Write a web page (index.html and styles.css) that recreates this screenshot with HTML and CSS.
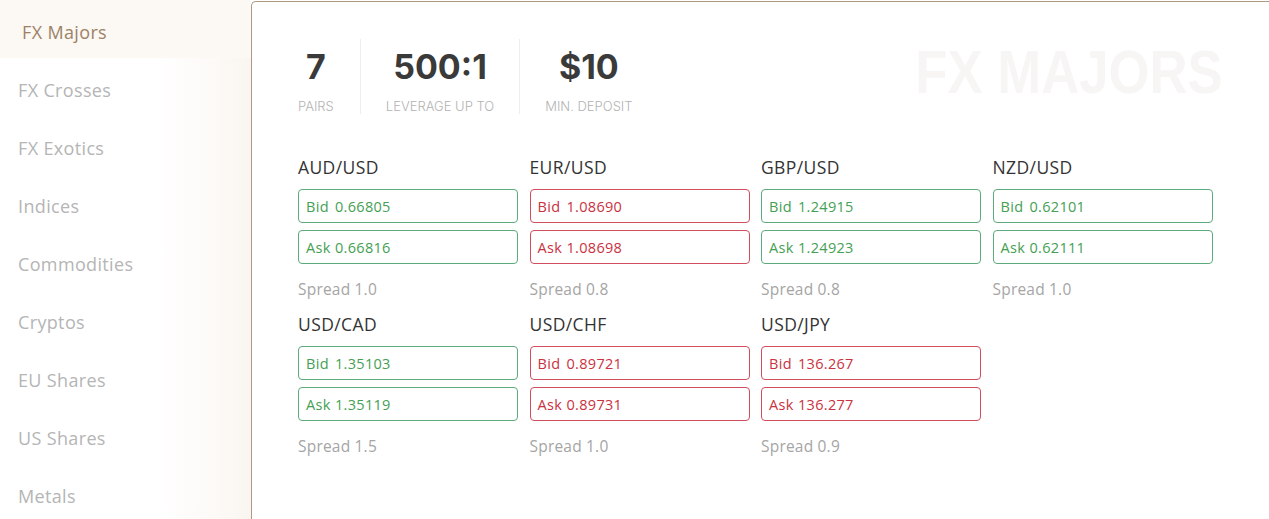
FILE: index.html
```html
<!DOCTYPE html>
<html lang="en">
<head>
<meta charset="utf-8">
<title>FX Majors</title>
<link rel="stylesheet" href="styles.css">
</head>
<body>
<div class="page">
  <nav class="sidebar">
    <div class="nav-item active">FX Majors</div>
    <div class="nav-item">FX Crosses</div>
    <div class="nav-item">FX Exotics</div>
    <div class="nav-item">Indices</div>
    <div class="nav-item">Commodities</div>
    <div class="nav-item">Cryptos</div>
    <div class="nav-item">EU Shares</div>
    <div class="nav-item">US Shares</div>
    <div class="nav-item">Metals</div>
  </nav>
  <main class="panel">
    <div class="watermark">FX MAJORS</div>
    <div class="stats">
      <div class="stat">
        <div class="stat-value">7</div>
        <div class="stat-label">PAIRS</div>
      </div>
      <div class="stat">
        <div class="stat-value">500:1</div>
        <div class="stat-label">LEVERAGE UP TO</div>
      </div>
      <div class="stat">
        <div class="stat-value">$10</div>
        <div class="stat-label">MIN. DEPOSIT</div>
      </div>
    </div>
    <div class="grid">
      <div class="pair up">
        <div class="pair-name">AUD/USD</div>
        <div class="quote"><span class="q-label">Bid</span>0.66805</div>
        <div class="quote"><span class="q-label">Ask</span>0.66816</div>
        <div class="spread">Spread 1.0</div>
      </div>
      <div class="pair down">
        <div class="pair-name">EUR/USD</div>
        <div class="quote"><span class="q-label">Bid</span>1.08690</div>
        <div class="quote"><span class="q-label">Ask</span>1.08698</div>
        <div class="spread">Spread 0.8</div>
      </div>
      <div class="pair up">
        <div class="pair-name">GBP/USD</div>
        <div class="quote"><span class="q-label">Bid</span>1.24915</div>
        <div class="quote"><span class="q-label">Ask</span>1.24923</div>
        <div class="spread">Spread 0.8</div>
      </div>
      <div class="pair up">
        <div class="pair-name">NZD/USD</div>
        <div class="quote"><span class="q-label">Bid</span>0.62101</div>
        <div class="quote"><span class="q-label">Ask</span>0.62111</div>
        <div class="spread">Spread 1.0</div>
      </div>
      <div class="pair up">
        <div class="pair-name">USD/CAD</div>
        <div class="quote"><span class="q-label">Bid</span>1.35103</div>
        <div class="quote"><span class="q-label">Ask</span>1.35119</div>
        <div class="spread">Spread 1.5</div>
      </div>
      <div class="pair down">
        <div class="pair-name">USD/CHF</div>
        <div class="quote"><span class="q-label">Bid</span>0.89721</div>
        <div class="quote"><span class="q-label">Ask</span>0.89731</div>
        <div class="spread">Spread 1.0</div>
      </div>
      <div class="pair down">
        <div class="pair-name">USD/JPY</div>
        <div class="quote"><span class="q-label">Bid</span>136.267</div>
        <div class="quote"><span class="q-label">Ask</span>136.277</div>
        <div class="spread">Spread 0.9</div>
      </div>
    </div>
  </main>
</div>
</body>
</html>
```

FILE: styles.css
```css
html, body {
  margin: 0;
  padding: 0;
  background: #ffffff;
  height: 100%;
  overflow: hidden;
}

body {
  font-family: "Open Sans", "Noto Sans", sans-serif;
}

.page {
  display: flex;
  min-height: 100vh;
}

.sidebar {
  width: 251px;
  flex: none;
  display: flex;
  flex-direction: column;
  background: linear-gradient(to right, #ffffff 0%, #ffffff 62%, #fdfbf9 80%, #faf5f0 100%);
}

.nav-item {
  height: 58px;
  box-sizing: border-box;
  padding-top: 6px;
  display: flex;
  align-items: center;
  padding-left: 18px;
  font-size: 18px;
  letter-spacing: 0.35px;
  color: #b5b5b5;
}

.nav-item.active {
  padding-left: 22px;
  color: #9d8265;
  background: #fcf8f4;
}

.panel {
  flex: 1;
  position: relative;
  margin-top: 1px;
  border-top: 1.5px solid #ad9880;
  border-left: 1.5px solid #ad9880;
  border-top-left-radius: 5px;
  padding: 37px 0 0 46px;
  background: #ffffff;
}

.watermark {
  position: absolute;
  top: 35px;
  right: 46px;
  font-family: "Liberation Sans", Arial, sans-serif;
  font-weight: 700;
  font-size: 62px;
  line-height: 70px;
  color: #f8f6f4;
  transform: scaleX(0.85);
  transform-origin: right center;
  pointer-events: none;
}

.stats {
  display: flex;
  position: relative;
}

.stat {
  display: flex;
  flex-direction: column;
  align-items: center;
  padding: 8px 25px 0;
  border-right: 1px solid #eeeeee;
}

.stat:first-child {
  padding-left: 0;
  padding-right: 26px;
}

.stat:last-child {
  border-right: none;
}

.stat-value {
  font-family: Inter, "Liberation Sans", sans-serif;
  font-weight: 700;
  font-size: 34px;
  line-height: 40px;
  color: #3a3a3a;
}

.stat-label {
  margin-top: 11px;
  font-family: Inter, "Liberation Sans", sans-serif;
  font-weight: 300;
  font-size: 13px;
  line-height: 16px;
  color: #b3b3b3;
}

.grid {
  margin-top: 41px;
  display: grid;
  grid-template-columns: repeat(4, 220px);
  column-gap: 11.5px;
  position: relative;
}

.pair {
  display: flex;
  flex-direction: column;
  padding-bottom: 12px;
}

.pair-name {
  font-size: 17.5px;
  letter-spacing: 0.4px;
  line-height: 24px;
  color: #333333;
  margin-bottom: 10px;
}

.quote {
  height: 34px;
  box-sizing: border-box;
  border: 1.3px solid #5daa7c;
  border-radius: 4px;
  display: flex;
  align-items: center;
  padding-left: 7px;
  font-size: 14.5px;
  letter-spacing: 0.3px;
  color: #45a054;
}

.quote + .quote {
  margin-top: 7px;
}

.q-label {
  width: 29px;
  flex: none;
}

.pair.down .quote {
  border-color: #d24d5e;
  color: #c9323f;
}

.spread {
  margin-top: 14px;
  font-size: 15.5px;
  line-height: 22px;
  letter-spacing: 0.2px;
  color: #a5a5a5;
}
```
